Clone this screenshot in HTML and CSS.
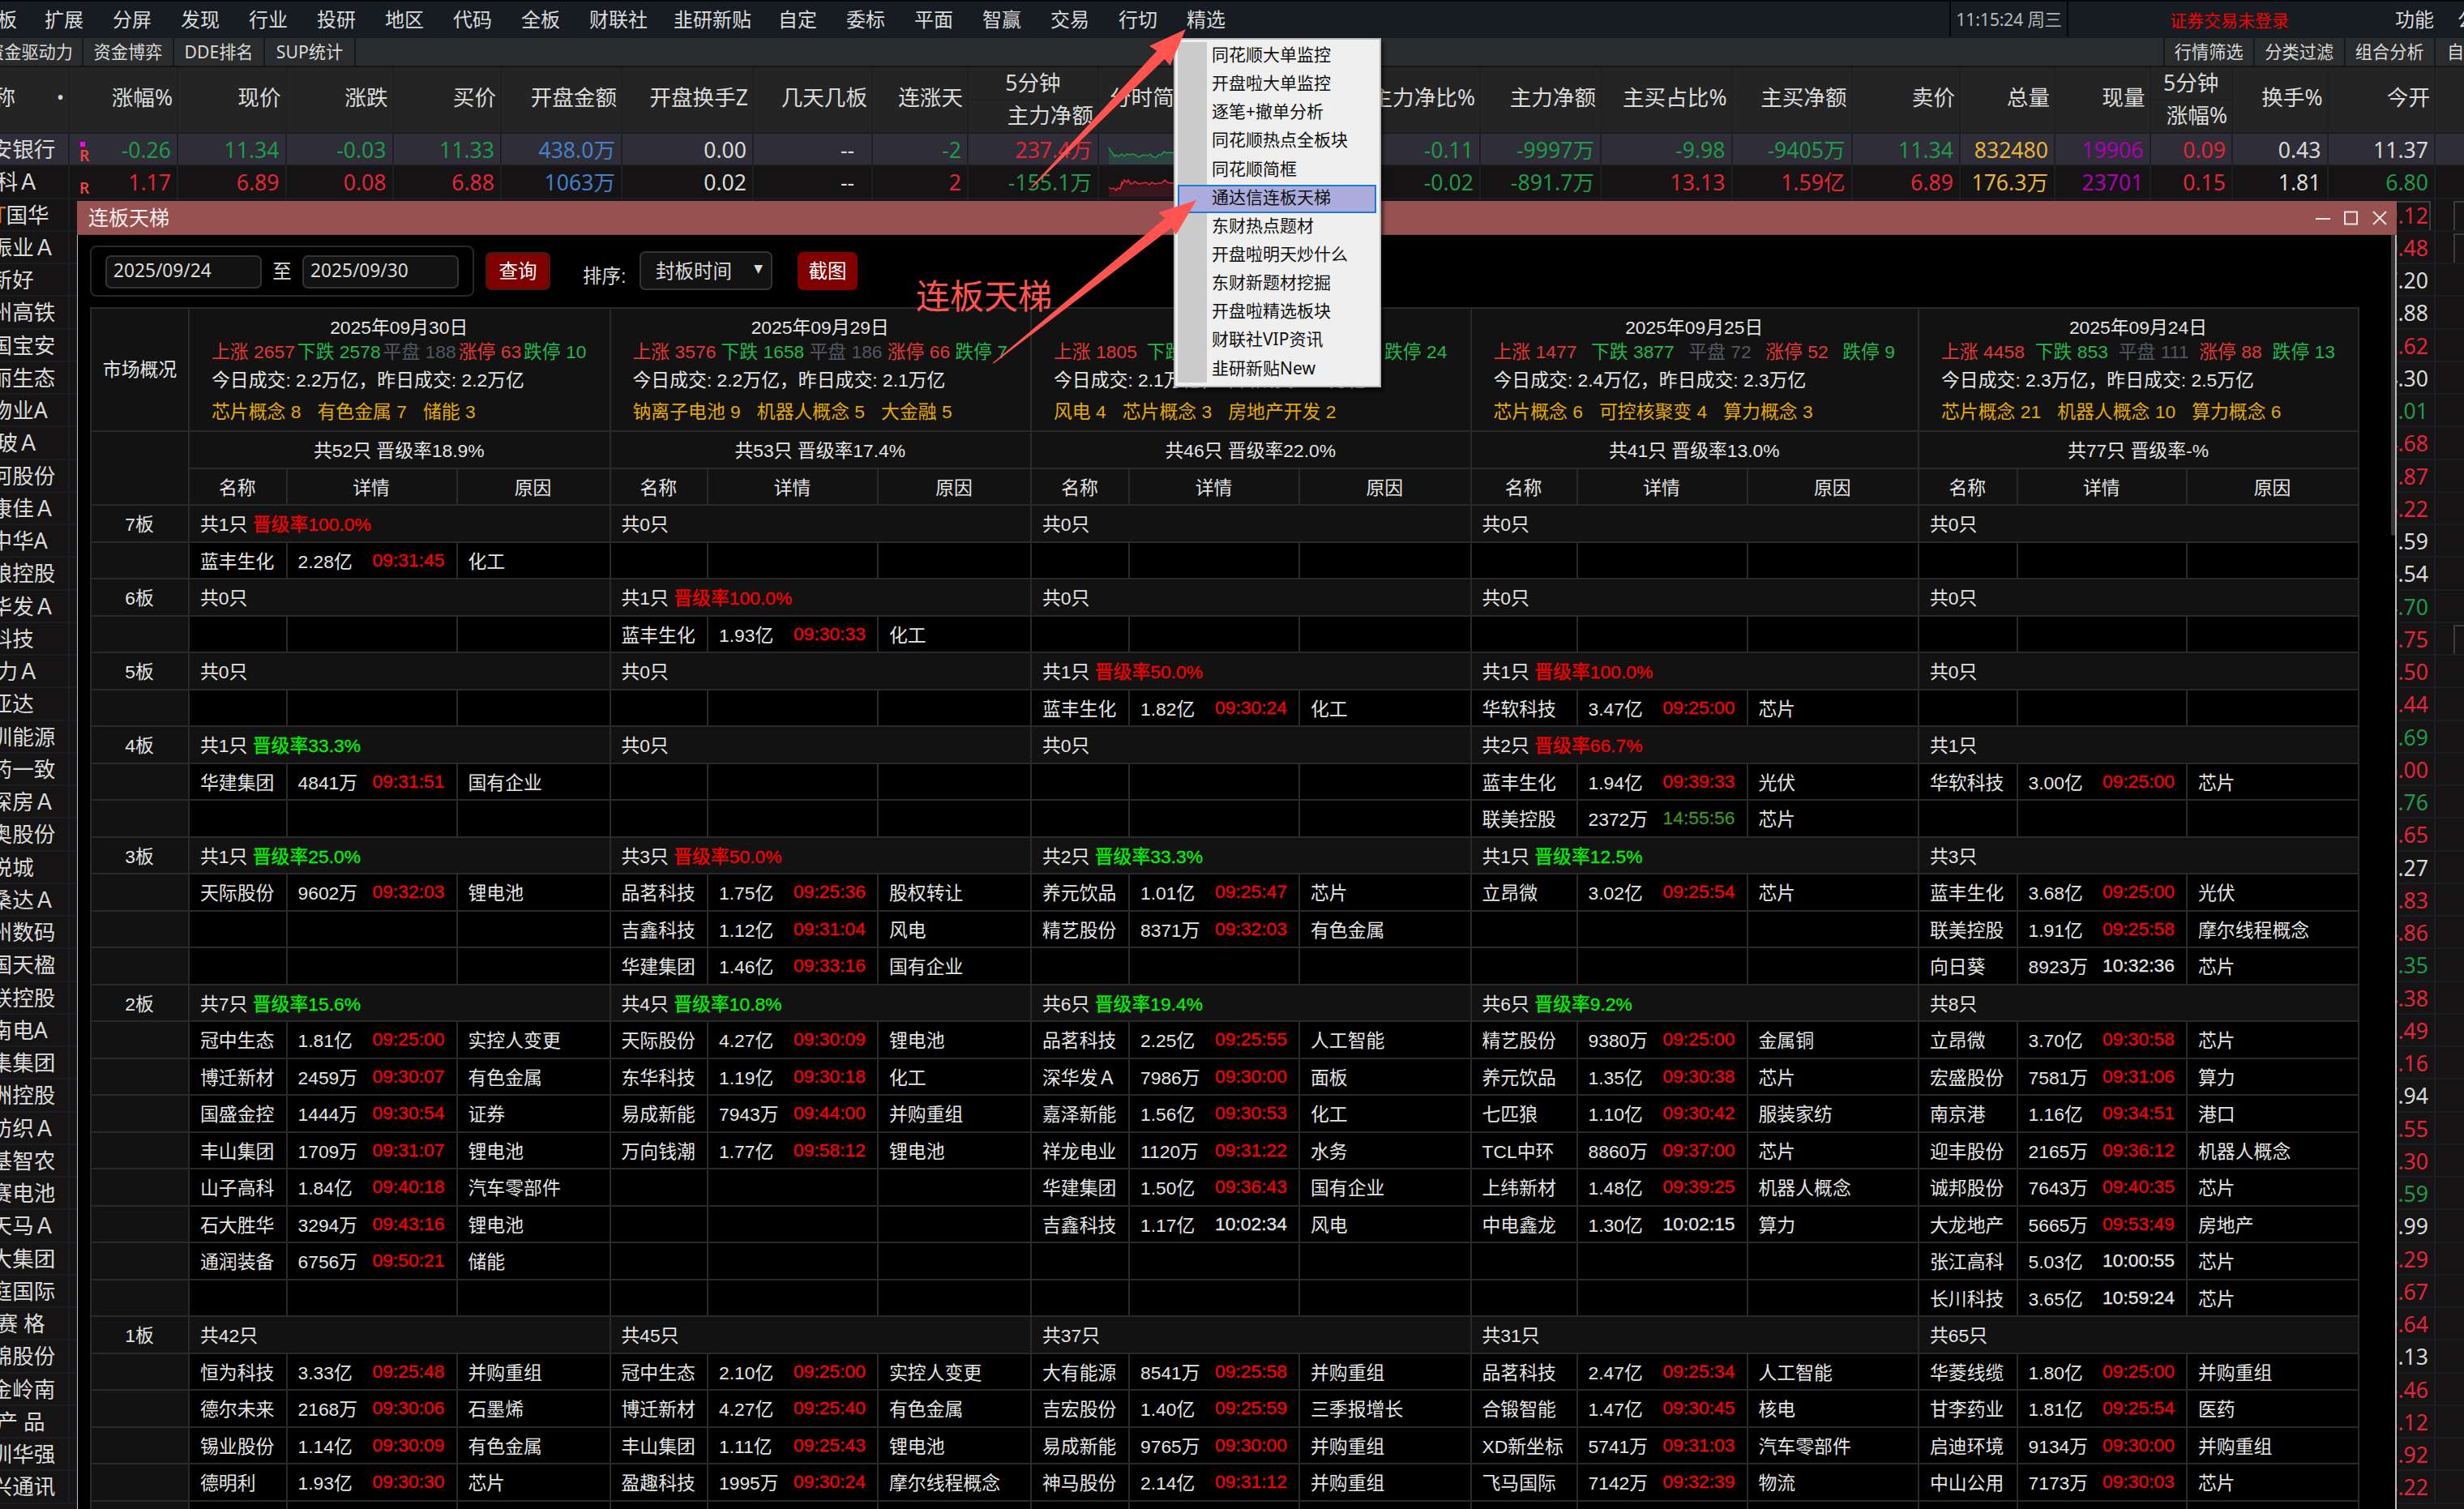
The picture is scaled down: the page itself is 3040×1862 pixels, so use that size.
FILE: index.html
```html
<!DOCTYPE html>
<html lang="zh-CN">
<head>
<meta charset="utf-8">
<title>连板天梯</title>
<link rel="stylesheet" href="styles.css">
</head>
<body>
<div class="app">
  <nav class="menubar">
    <span class="m first">板</span><span class="m">扩展</span><span class="m">分屏</span><span class="m">发现</span><span class="m">行业</span><span class="m">投研</span><span class="m">地区</span><span class="m">代码</span><span class="m">全板</span><span class="m w3">财联社</span><span class="m w4">韭研新贴</span><span class="m">自定</span><span class="m">委标</span><span class="m">平面</span><span class="m">智赢</span><span class="m">交易</span><span class="m">行切</span><span class="m">精选</span>
    <span class="clock">11:15:24 周三</span>
    <span class="login">证券交易未登录</span>
    <span class="func">功能</span>
    <span class="pub">公式</span>
  </nav>
  <div class="tabs">
    <span class="tab cut">资金驱动力</span><span class="tab">资金博弈</span><span class="tab">DDE排名</span><span class="tab">SUP统计</span>
    <span class="fill"></span>
    <span class="tab r">行情筛选</span><span class="tab r">分类过滤</span><span class="tab r">组合分析</span><span class="tab last">自定</span>
  </div>
  <div class="quotes" id="quotes"></div>
</div>

<section class="window">
  <header class="titlebar">
    <span>连板天梯</span>
    <svg class="winbtns" width="92" height="24" viewBox="0 0 92 24" fill="none" stroke="#f0e4e4" stroke-width="2">
      <path d="M2 13H20"/><rect x="38" y="4.500" width="15" height="15"/><path d="M73 4L89 20M89 4L73 20" stroke-width="1.800"/>
    </svg>
  </header>
  <div class="content">
    <div class="toolbar">
      <div class="range">
        <div class="date">2025/09/24</div><span class="to">至</span><div class="date">2025/09/30</div>
      </div>
      <button class="btn query">查询</button>
      <span class="sortlabel">排序:</span>
      <div class="select"><span>封板时间</span><i>▼</i></div>
      <button class="btn shot">截图</button>
    </div>
    <div class="ladder" id="ladder"></div>
  </div>
  <div class="thumb"></div>
</section>

<ul class="menu">
  <li>同花顺大单监控</li><li>开盘啦大单监控</li><li>逐笔+撤单分析</li><li>同花顺热点全板块</li><li>同花顺简框</li><li class="on">通达信连板天梯</li><li>东财热点题材</li><li>开盘啦明天炒什么</li><li>东财新题材挖掘</li><li>开盘啦精选板块</li><li>财联社VIP资讯</li><li>韭研新贴New</li>
</ul>

<div class="note">连板天梯</div>
<svg class="arrows" width="3040" height="1862" viewBox="0 0 3040 1862" fill="#ff5350">
  <path d="M1463 36L1418 56.700L1427.300 62.700L1272 231L1273.500 231.500L1437 72.700L1443.500 81Z"/>
  <path d="M1476 247L1429 262.300L1437.500 269.300L1224.500 448L1226 448.500L1445.300 281L1451 289.500Z"/>
</svg>
<script src="app.js"></script>
</body>
</html>
```
FILE: styles.css
```css
* { box-sizing: border-box; }
body {
  margin: 0;
  width: 3040px;
  height: 1862px;
  overflow: hidden;
  position: relative;
  background: #151314;
  color: #dadada;
  font-family: "Noto Sans", "Noto Sans CJK SC", sans-serif;
}
.app { height: 1862px; overflow: hidden; }

/* top menu */
.menubar {
  display: flex;
  height: 47px;
  border-top: 2px solid #050607;
  background: #171c23;
  font-size: 24px;
  line-height: 43px;
  white-space: nowrap;
}
.m { width: 84px; flex: none; }
.m.first { width: 58px; padding-left: 0; text-indent: -3px; }
.m.w3 { width: 104px; }
.m.w4 { width: 129px; }
.m:nth-child(2) { margin-left: -3px; }
.clock {
  margin-left: auto;
  width: 147px;
  height: 43px;
  flex: none;
  border: solid #050607;
  border-width: 0 2px;
  font-size: 21.5px;
  line-height: 43px;
  text-align: center;
  color: #b4b6b8;
  letter-spacing: -0.3px;
}
.login { width: 402px; flex: none; padding-left: 125px; font-size: 21px; line-height: 46px; color: #f80000; }
.func { width: 78px; flex: none; padding-left: 1px; }
.pub { width: 8px; flex: none; overflow: hidden; }

.tabs {
  display: flex;
  height: 36px;
  background: #292b2c;
  border-bottom: 2px solid #151515;
  font-size: 21.2px;
  line-height: 34px;
  white-space: nowrap;
}
.tab { width: 112px; text-align: center; border-right: 2px solid #161718; flex: none; }
.tab.cut { width: 103px; direction: rtl; padding-right: 11px; overflow: hidden; text-align: right; display: flex; }
.fill { flex: 1; border-right: 2px solid #161718; }
.tab.r { width: 111.5px; }
.tab.last { width: 35px; border: 0; text-align: left; padding-left: 14px; overflow: hidden; }

/* quote list */
.quotes {
  display: grid;
  grid-template-columns: 86px 134px 133.500px 132px 133.500px 149px 162px 147px 118px 161px 293px 178px 149px 161.500px 148px 133.500px 117px 117.500px 101.500px 117.500px 132.500px 60px;
  grid-template-rows: 82px;
  grid-auto-rows: 40.25px;
  font-size: 26.6px;
  width: 3068px;
}
.q {
  border-right: 2px solid #1d1e26;
  border-bottom: 2px solid #1a1c24;
  padding-right: 7px;
  text-align: right;
  line-height: 41px;
  white-space: nowrap;
  overflow: hidden;
  position: relative;
}
.q.h { background: #242424; line-height: 74px; display: flex; justify-content: flex-end; padding-right: 5px; }
.q.two { flex-direction: column; line-height: 38px; padding: 0; }
.q.two b { font-weight: 400; text-align: center; border-bottom: 2px solid #1d1e26; height: 41px; }
.q.two b + b { text-align: right; padding-right: 5px; border: 0; height: 39px; line-height: 37px; }
.q.name { text-align: left; text-indent: -38px; padding: 0; line-height: 38px; }
.q.hname { justify-content: space-between; text-indent: -34px; }
.q.hname i { font-style: normal; text-indent: 0; font-size: 24px; }
.q.sel { background: #2f2d37; }
.q.spark { padding: 0; text-align: left; }
.q.spark svg { display: block; }
.q.left { justify-content: flex-start; padding-left: 13px; }
.q.boxed::before { content: ""; position: absolute; left: 0; right: 4px; top: 2px; height: 35px; border: 2px solid #3c3c3e; }
.q.boxlast::before { content: ""; position: absolute; left: 22px; right: 0; top: 2px; height: 35px; border: 2px solid #3c3c3e; }
.mark { position: absolute; left: 12px; top: 17px; font-size: 19px; line-height: 20px; font-weight: 600; color: #f0443f; }
.mark.dot::before { content: ""; position: absolute; left: 1px; top: -7px; width: 6px; height: 6px; background: #f0f; }
.q.stg { text-indent: -22px; }
.q.stg em { font-style: normal; color: #d8762a; }
.up { color: #e2253d; }
.dn { color: #1f994b; }
.bl { color: #4680c8; }
.ye { color: #e5b53b; }
.pu { color: #ab00b4; }

/* ladder window */
.window {
  position: absolute;
  left: 95px;
  top: 248px;
  width: 2862px;
  height: 1620px;
  background: #000;
  display: flex;
  flex-direction: column;
  overflow: hidden;
}
.titlebar {
  height: 42px;
  flex: none;
  display: flex;
  justify-content: space-between;
  align-items: center;
  padding: 0 10px 0 14px;
  background: #975151;
  border-bottom: 1px solid #7c4444;
  color: #f4eeee;
  font-size: 25px;
  line-height: 40px;
}
.titlebar span { margin-top: -1px; }
.content { flex: 1; border: solid #bdbdbd; border-width: 0 2px 0 1px; padding: 13px 0 0 15px; }
.thumb { position: absolute; right: 2px; top: 42px; width: 5px; height: 371px; background: #363636; border-radius: 0 0 3px 3px; }

.toolbar {
  display: flex;
  height: 76px;
  font-family: "Liberation Sans", "Noto Sans CJK SC", sans-serif;
  font-size: 23.5px;
}
.range {
  display: flex;
  width: 474px;
  height: 63px;
  margin-top: 0;
  padding: 10px 0 0 17px;
  border: 2px solid #272727;
  border-radius: 8px;
}
.date {
  width: 193px;
  height: 41px;
  padding-left: 8px;
  background: #121212;
  border: 2px solid #333;
  border-radius: 7px;
  font-family: "Noto Sans", sans-serif;
  font-size: 22.7px;
  line-height: 34px;
}
.to { width: 50px; text-align: center; line-height: 41px; }
.btn {
  margin: 8px 0 0 14px;
  width: 80px;
  height: 47px;
  padding: 0;
  background: #800000;
  border: 2px solid #3c1c1c;
  border-radius: 7px;
  color: #fff;
  font: inherit;
  line-height: 40px;
}
.sortlabel { width: 70px; margin-left: 40px; line-height: 77px; }
.select {
  width: 164px;
  height: 48px;
  margin-top: 7px;
  padding: 0 10px 0 20px;
  display: flex;
  justify-content: space-between;
  background: #121212;
  border: 2px solid #333;
  border-radius: 7px;
  line-height: 47px;
}
.select span { margin-left: -2px; }
.select i { font-style: normal; font-family: "DejaVu Sans", sans-serif; font-size: 14px; line-height: 39px; }
.shot { margin-left: 31px; width: 74px; border-color: #800000; }

.ladder {
  display: grid;
  width: 2800px;
  grid-template-columns: 121px 120.500px 210px 189px 120.500px 210px 189px 121px 210px 211.500px 131px 210px 211.500px 121.500px 209.500px 212px;
  grid-template-rows: 152px;
  grid-auto-rows: 45.52px;
  border: solid #292929;
  border-width: 2px 0 0 2px;
  font-family: "Liberation Sans", "Noto Sans CJK SC", sans-serif;
  font-size: 22.85px;
  color: #e4e4e4;
  white-space: nowrap;
}
.c { border: solid #292929; border-width: 0 2px 2px 0; padding: 0 14px 0 13px; line-height: 46px; background: #000; overflow: hidden; }
.g { background: #121212; }
.mid { text-align: center; }
.span3 { grid-column: span 3; }
.row2 { grid-row: span 2; }
.detail { display: flex; justify-content: space-between; }
.detail span + span { line-height: 43px; -webkit-text-stroke: 0.3px currentColor; }
.early { color: #fa0000; }
.rate-up, .rate-dn { -webkit-text-stroke: 0.3px currentColor; }
.rate-up { color: #f80000; }
.rate-dn { color: #00f400; }
.late { color: #3d971d; }
.overview { padding: 6px 28px 0 27px; }
.overview div { line-height: 37px; }
.overview .day { text-align: center; height: 32px; line-height: 35px; }
.overview .stats { display: flex; justify-content: space-between; line-height: 30px; height: 32px; }
.overview .hot { display: flex; gap: 20px; color: #e2aa00; margin-top: 2px; }
.s-up { color: #e23737; }
.s-dn { color: #20b84e; }
.s-flat { color: #515663; }
.market { line-height: 151px; padding: 0; }

/* dropdown */
.menu {
  position: absolute;
  left: 1448px;
  top: 47px;
  width: 256px;
  height: 431px;
  margin: 0;
  padding: 3px 4px 0 3px;
  list-style: none;
  background: linear-gradient(90deg, #cbcbcb 36px, #efefef 36px) no-repeat 3px 3px / calc(100% - 3px) 420px, #efefef;
  border: 2px solid #b9b9b9;
  box-shadow: 3px 4px 4px rgba(0, 0, 0, .55);
  color: #101010;
  font-size: 21px;
}
.menu li { height: 35.15px; line-height: 31px; padding-left: 42px; white-space: nowrap; }
.menu .on { background: #abacdd; outline: 2px solid #1c7bd0; outline-offset: -2px; }

.note {
  position: absolute;
  left: 1130px;
  top: 335px;
  font-size: 42px;
  line-height: 60px;
  color: #ff5350;
  white-space: nowrap;
}
.arrows { position: absolute; left: 0; top: 0; }
```
FILE: app.js
```js
const el = (parent, cls, html = "") => {
  const d = document.createElement("div");
  d.className = cls;
  d.innerHTML = html;
  parent.appendChild(d);
  return d;
};

/* quote list behind the window */
const quotes = document.getElementById("quotes");
const heads = ["涨幅%", "现价", "涨跌", "买价", "开盘金额", "开盘换手Z", "几天几板", "连涨天", ["5分钟", "主力净额"], "分时简图", "主力净比%", "主力净额", "主买占比%", "主买净额", "卖价", "总量", "现量", ["5分钟", "涨幅%"], "换手%", "今开", ""];
el(quotes, "q h hname", "<span>名称</span><i>•</i>");
heads.forEach(h => Array.isArray(h)
  ? el(quotes, "q h two", `<b>${h[0]}</b><b>${h[1]}</b>`)
  : el(quotes, "q h" + (h === "分时简图" ? " left" : ""), h));

const spark = (pts, color, fill) => `<svg width="291" height="38" fill="none"><path d="M12 38L${pts}L93 38Z" fill="${fill}"/><path d="M${pts}" stroke="${color}" stroke-width="1.5"/></svg>`;
const s1 = spark("12 17L14 21L16 23L19 28L21 26L24 28L28 25L31 28L34 25L38 26L41 25L45 26L49 29L54 26L60 27L63 25L67 29L71 29L73 26L77 26L80 22L84 24L88 23L93 24", "#1f994b", "#2c4340");
const s2 = spark("12 26L15 28L18 27L21 30L23 27L26 28L28 20L29 22L31 17L34 20L36 17L39 22L42 21L44 19L49 22L54 21L58 20L62 23L65 20L69 22L73 21L77 21L81 17L84 20L88 21L93 21", "#e2253d", "#3a151b");
const top2 = [
  ["平安银行", [["-0.26", "dn"], ["11.34", "dn"], ["-0.03", "dn"], ["11.33", "dn"], ["438.0万", "bl"], ["0.00"], ["--&nbsp;&nbsp;"], ["-2", "dn"], ["237.4万", "up"], s1, ["-0.11", "dn"], ["-9997万", "dn"], ["-9.98", "dn"], ["-9405万", "dn"], ["11.34", "dn"], ["832480", "ye"], ["19906", "pu"], ["0.09", "up"], ["0.43"], ["11.37"], [""]]],
  ["万 科Ａ", [["1.17", "up"], ["6.89", "up"], ["0.08", "up"], ["6.88", "up"], ["1063万", "bl"], ["0.02"], ["--&nbsp;&nbsp;"], ["2", "up"], ["-155.1万", "dn"], s2, ["-0.02", "dn"], ["-891.7万", "dn"], ["13.13", "up"], ["1.59亿", "up"], ["6.89", "up"], ["176.3万", "ye"], ["23701", "pu"], ["0.15", "up"], ["1.81"], ["6.80", "dn"], [""]]]
];
top2.forEach(([name, cells], r) => {
  const sel = r ? "" : " sel";
  el(quotes, "q name" + sel, name);
  cells.forEach((c, i) => {
    if (typeof c === "string") return el(quotes, "q spark" + sel, c);
    const mark = i ? "" : `<span class="mark${r ? "" : " dot"}">R</span>`;
    el(quotes, "q" + sel + (c[1] ? " " + c[1] : ""), mark + c[0]);
  });
});
const names = "ST国华,深振业Ａ,全新好,神州高铁,中国宝安,美丽生态,深物业A,南 玻Ａ,沙河股份,深康佳Ａ,深中华A,深粮控股,深华发Ａ,深科技,特 力Ａ,飞亚达,深圳能源,国药一致,深深房Ａ,富奥股份,大悦城,深桑达Ａ,神州数码,中国天楹,华联控股,深南电A,中集集团,中洲控股,深纺织Ａ,京基智农,德赛电池,深天马Ａ,方大集团,皇庭国际,深 赛 格,华锦股份,中金岭南,农 产 品,深圳华强,中兴通讯".split(",");
const opens = "9.12r,0.48r,7.20,2.88,2.62r,4.30,9.01g,4.68r,8.87r,6.22r,5.59,6.54,4.70g,6.75r,7.50r,6.44r,6.69g,6.00r,7.76g,6.65r,3.27,1.83r,4.86r,6.35g,4.38r,8.49r,3.16r,7.94,2.55r,5.30r,7.59g,9.99,4.29r,2.67r,0.64r,5.13,6.46r,8.12r,3.92r,6.22r".split(",");
names.forEach((n, r) => {
  el(quotes, "q name" + (r ? "" : " stg"), r ? n : "<em>ST</em>国华");
  for (let i = 0; i < 19; i++) el(quotes, "q");
  const v = opens[r], k = v.slice(-1);
  el(quotes, "q" + (k === "r" ? " up" : k === "g" ? " dn" : "") + (r ? "" : " boxed"), v.replace(/[rg]/, ""));
  el(quotes, "q" + ([0, 1, 13].includes(r) ? " boxlast" : ""));
});

/* ladder: one entry per trading day; tiers run from 7 boards down to 1 */
const days = [
  { d: "2025年09月30日", s: [2657, 2578, 188, 63, 10], v: ["2.2", "2.2"], h: ["芯片概念 8", "有色金属 7", "储能 3"], t: "共52只 晋级率18.9%",
    n: ["1 100.0", "0", "0", "1 33.3", "1 25.0", "7 15.6", "42"],
    r: [["蓝丰生化 2.28亿 09:31:45 化工"], [], [], ["华建集团 4841万 09:31:51 国有企业"], ["天际股份 9602万 09:32:03 锂电池"],
      ["冠中生态 1.81亿 09:25:00 实控人变更", "博迁新材 2459万 09:30:07 有色金属", "国盛金控 1444万 09:30:54 证券", "丰山集团 1709万 09:31:07 锂电池", "山子高科 1.84亿 09:40:18 汽车零部件", "石大胜华 3294万 09:43:16 锂电池", "通润装备 6756万 09:50:21 储能"],
      ["恒为科技 3.33亿 09:25:48 并购重组", "德尔未来 2168万 09:30:06 石墨烯", "锡业股份 1.14亿 09:30:09 有色金属", "德明利 1.93亿 09:30:30 芯片"]] },
  { d: "2025年09月29日", s: [3576, 1658, 186, 66, 7], v: ["2.2", "2.1"], h: ["钠离子电池 9", "机器人概念 5", "大金融 5"], t: "共53只 晋级率17.4%",
    n: ["0", "1 100.0", "0", "0", "3 50.0", "4 10.8", "45"],
    r: [[], ["蓝丰生化 1.93亿 09:30:33 化工"], [], [], ["品茗科技 1.75亿 09:25:36 股权转让", "吉鑫科技 1.12亿 09:31:04 风电", "华建集团 1.46亿 09:33:16 国有企业"],
      ["天际股份 4.27亿 09:30:09 锂电池", "东华科技 1.19亿 09:30:18 化工", "易成新能 7943万 09:44:00 并购重组", "万向钱潮 1.77亿 09:58:12 锂电池"],
      ["冠中生态 2.10亿 09:25:00 实控人变更", "博迁新材 4.27亿 09:25:40 有色金属", "丰山集团 1.11亿 09:25:43 锂电池", "盈趣科技 1995万 09:30:24 摩尔线程概念"]] },
  { d: "2025年09月26日", s: [1805, 3539, 82, 48, 24], v: ["2.1", "2.4"], h: ["风电 4", "芯片概念 3", "房地产开发 2"], t: "共46只 晋级率22.0%",
    n: ["0", "0", "1 50.0", "0", "2 33.3", "6 19.4", "37"],
    r: [[], [], ["蓝丰生化 1.82亿 09:30:24 化工"], [], ["养元饮品 1.01亿 09:25:47 芯片", "精艺股份 8371万 09:32:03 有色金属"],
      ["品茗科技 2.25亿 09:25:55 人工智能", "深华发Ａ 7986万 09:30:00 面板", "嘉泽新能 1.56亿 09:30:53 化工", "祥龙电业 1120万 09:31:22 水务", "华建集团 1.50亿 09:36:43 国有企业", "吉鑫科技 1.17亿 10:02:34 风电"],
      ["大有能源 8541万 09:25:58 并购重组", "吉宏股份 1.40亿 09:25:59 三季报增长", "易成新能 9765万 09:30:00 并购重组", "神马股份 2.14亿 09:31:12 并购重组"]] },
  { d: "2025年09月25日", s: [1477, 3877, 72, 52, 9], v: ["2.4", "2.3"], h: ["芯片概念 6", "可控核聚变 4", "算力概念 3"], t: "共41只 晋级率13.0%",
    n: ["0", "0", "1 100.0", "2 66.7", "1 12.5", "6 9.2", "31"],
    r: [[], [], ["华软科技 3.47亿 09:25:00 芯片"], ["蓝丰生化 1.94亿 09:39:33 光伏", "联美控股 2372万 14:55:56 芯片"], ["立昂微 3.02亿 09:25:54 芯片"],
      ["精艺股份 9380万 09:25:00 金属铜", "养元饮品 1.35亿 09:30:38 芯片", "七匹狼 1.10亿 09:30:42 服装家纺", "TCL中环 8860万 09:37:00 芯片", "上纬新材 1.48亿 09:39:25 机器人概念", "中电鑫龙 1.30亿 10:02:15 算力"],
      ["品茗科技 2.47亿 09:25:34 人工智能", "合锻智能 1.47亿 09:30:45 核电", "XD新坐标 5741万 09:31:03 汽车零部件", "飞马国际 7142万 09:32:39 物流"]] },
  { d: "2025年09月24日", s: [4458, 853, 111, 88, 13], v: ["2.3", "2.5"], h: ["芯片概念 21", "机器人概念 10", "算力概念 6"], t: "共77只 晋级率-%",
    n: ["0", "0", "0", "1", "3", "8", "65"],
    r: [[], [], [], ["华软科技 3.00亿 09:25:00 芯片"], ["蓝丰生化 3.68亿 09:25:00 光伏", "联美控股 1.91亿 09:25:58 摩尔线程概念", "向日葵 8923万 10:32:36 芯片"],
      ["立昂微 3.70亿 09:30:58 芯片", "宏盛股份 7581万 09:31:06 算力", "南京港 1.16亿 09:34:51 港口", "迎丰股份 2165万 09:36:12 机器人概念", "诚邦股份 7643万 09:40:35 芯片", "大龙地产 5665万 09:53:49 房地产", "张江高科 5.03亿 10:00:55 芯片", "长川科技 3.65亿 10:59:24 芯片"],
      ["华菱线缆 1.80亿 09:25:00 并购重组", "甘李药业 1.81亿 09:25:54 医药", "启迪环境 9134万 09:30:00 并购重组", "中山公用 7173万 09:30:03 芯片"]] }
];

const ladder = document.getElementById("ladder");
el(ladder, "c g mid market", "市场概况");
const labels = [["上涨", "s-up"], ["下跌", "s-dn"], ["平盘", "s-flat"], ["涨停", "s-up"], ["跌停", "s-dn"]];
days.forEach(x => el(ladder, "c g span3 overview",
  `<div class="day">${x.d}</div>` +
  `<div class="stats">${labels.map((l, i) => `<span class="${l[1]}">${l[0]} ${x.s[i]}</span>`).join("")}</div>` +
  `<div>今日成交: ${x.v[0]}万亿，昨日成交: ${x.v[1]}万亿</div>` +
  `<div class="hot">${x.h.map(h => `<span>${h}</span>`).join("")}</div>`));
el(ladder, "c g row2");
days.forEach(x => el(ladder, "c g mid span3", x.t));
days.forEach(() => ["名称", "详情", "原因"].forEach(h => el(ladder, "c g mid", h)));

const depth = [1, 1, 1, 2, 3, 8, 5];
depth.forEach((rows, t) => {
  el(ladder, "c g mid", 7 - t + "板");
  days.forEach(x => {
    const [n, p] = x.n[t].split(" ");
    el(ladder, "c g span3", `共${n}只` + (p ? ` <span class="${p >= 50 ? "rate-up" : "rate-dn"}">晋级率${p}%</span>` : ""));
  });
  for (let i = 0; i < rows; i++) {
    el(ladder, "c g");
    days.forEach(x => {
      const [a, b, c, e] = (x.r[t][i] || "").split(" ");
      el(ladder, "c", a);
      const cls = !c ? "" : c < "10" ? "early" : c > "14" ? "late" : "";
      el(ladder, "c detail", b ? `<span>${b}</span><span class="${cls}">${c}</span>` : "");
      el(ladder, "c", e || "");
    });
  }
});
```
